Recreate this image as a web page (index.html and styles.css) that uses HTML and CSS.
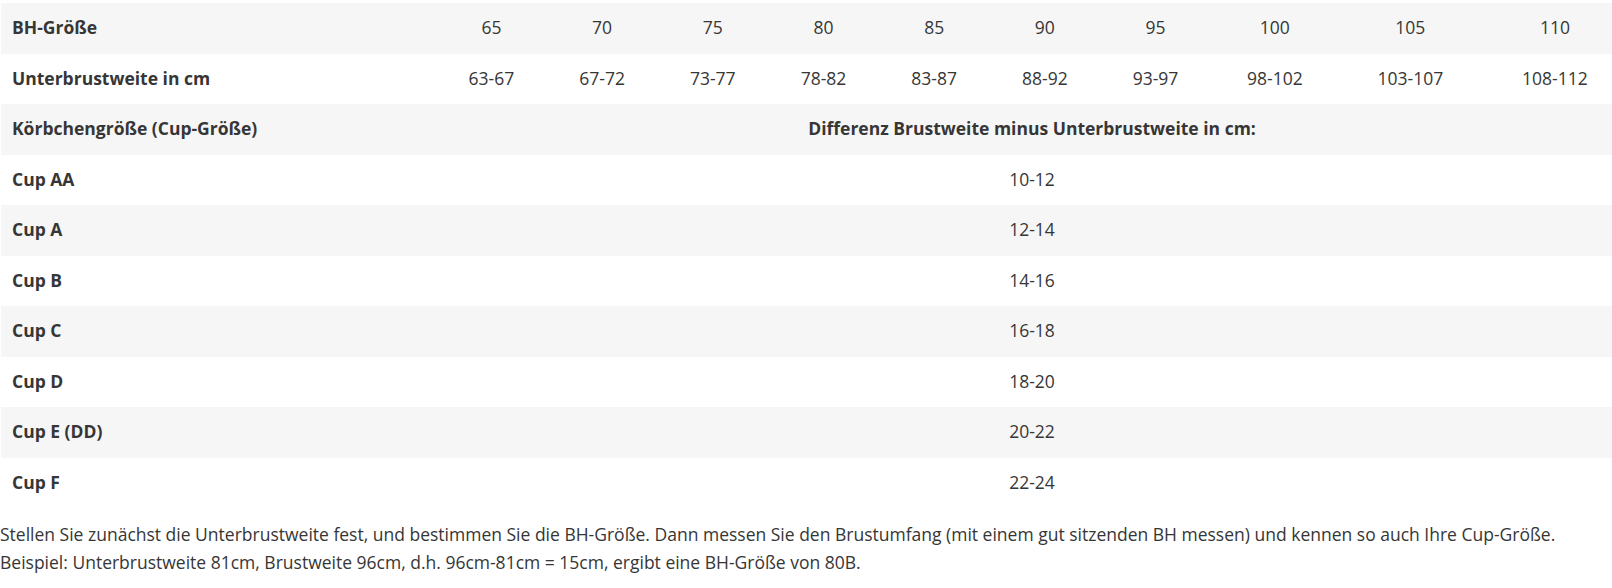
FILE: index.html
```html
<!DOCTYPE html>
<html lang="de">
<head>
<meta charset="utf-8">
<title>BH-Größentabelle</title>
<link rel="stylesheet" href="styles.css">
</head>
<body>
<div class="page">
  <div class="table-wrap">
    <table class="size-table">
      <colgroup>
        <col class="c-label">
        <col class="c-45"><col class="c-45"><col class="c-45"><col class="c-45"><col class="c-45"><col class="c-45"><col class="c-45">
        <col class="c-56"><col class="c-65"><col class="c-64">
      </colgroup>
      <tbody>
        <tr><th>BH-Größe</th><td>65</td><td>70</td><td>75</td><td>80</td><td>85</td><td>90</td><td>95</td><td>100</td><td>105</td><td>110</td></tr>
        <tr><th>Unterbrustweite in cm</th><td>63-67</td><td>67-72</td><td>73-77</td><td>78-82</td><td>83-87</td><td>88-92</td><td>93-97</td><td>98-102</td><td>103-107</td><td>108-112</td></tr>
        <tr><th>Körbchengröße (Cup-Größe)</th><th class="span-head" colspan="10">Differenz Brustweite minus Unterbrustweite in cm:</th></tr>
        <tr><th>Cup AA</th><td colspan="10">10-12</td></tr>
        <tr><th>Cup A</th><td colspan="10">12-14</td></tr>
        <tr><th>Cup B</th><td colspan="10">14-16</td></tr>
        <tr><th>Cup C</th><td colspan="10">16-18</td></tr>
        <tr><th>Cup D</th><td colspan="10">18-20</td></tr>
        <tr><th>Cup E (DD)</th><td colspan="10">20-22</td></tr>
        <tr><th>Cup F</th><td colspan="10">22-24</td></tr>
      </tbody>
    </table>
  </div>
  <p class="note">Stellen Sie zunächst die Unterbrustweite fest, und bestimmen Sie die BH-Größe. Dann messen Sie den Brustumfang (mit einem gut sitzenden BH messen) und kennen so auch Ihre Cup-Größe.<br>Beispiel: Unterbrustweite 81cm, Brustweite 96cm, d.h. 96cm-81cm = 15cm, ergibt eine BH-Größe von 80B.</p>
</div>
</body>
</html>
```

FILE: styles.css
```css
html, body {
  margin: 0;
  padding: 0;
  background: #ffffff;
}

.page {
  font-family: "Open Sans", "Noto Sans", sans-serif;
  color: #363636;
  font-size: 17.5px;
  overflow-x: hidden;
  padding-top: 3px;
}

.table-wrap {
  padding-left: 1px;
}

.size-table {
  border-collapse: collapse;
  border-spacing: 0;
  table-layout: fixed;
  width: 1627px;
}

.c-label { width: 435px; }
.c-45 { width: 110.7px; }
.c-56 { width: 128px; }
.c-65 { width: 143px; }
.c-64 { width: 146px; }

.size-table tr:nth-child(odd) {
  background: #f6f6f6;
}

.size-table th,
.size-table td {
  height: 50.5px;
  box-sizing: border-box;
  padding: 0 11px;
  line-height: 25.6px;
  vertical-align: middle;
  white-space: nowrap;
}

.size-table th {
  text-align: left;
  font-weight: 700;
}

.size-table td {
  text-align: center;
  font-weight: 400;
}

.size-table th.span-head {
  text-align: center;
}

.note {
  margin: 12px 0 0 0;
  line-height: 28px;
  font-size: 17.5px;
}
```
